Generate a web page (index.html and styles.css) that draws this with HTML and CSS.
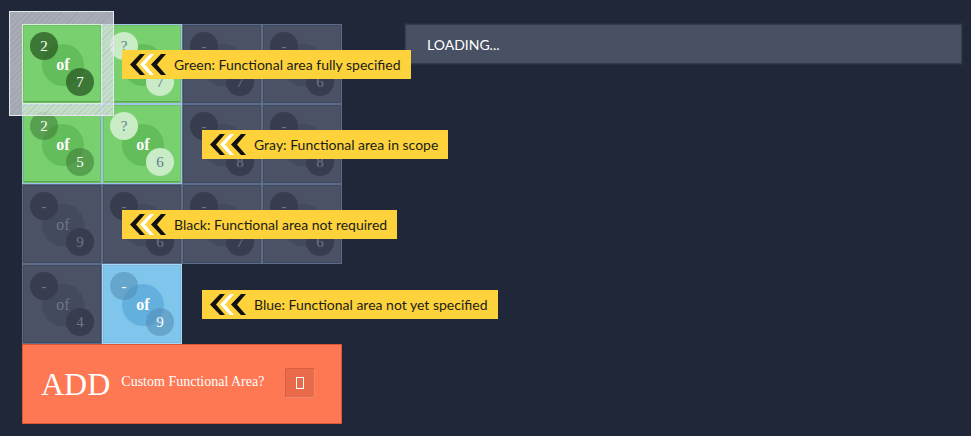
FILE: index.html
```html
<!DOCTYPE html>
<html>
<head>
<meta charset="utf-8">
<link rel="stylesheet" href="styles.css">
</head>
<body>
<div class="page">
  <div class="left">
    <div class="board">
      <div class="helper"></div>
      <div class="tile green active">
        <span class="c-big"></span>
        <span class="c-a">2</span>
        <span class="of">of</span>
        <span class="c-b">7</span>
        <div class="tip"><svg class="chev" viewBox="0 0 36 21" width="36" height="21"><polygon points="0,10.5 10,0 15,0 6,10.5 15,21 10,21" fill="#111"/><polygon points="10,10.5 20,0 24,0 15,10.5 24,21 20,21" fill="#fff"/><polygon points="21,10.5 31,0 36,0 27,10.5 36,21 31,21" fill="#111"/></svg><span>Green: Functional area fully specified</span></div>
      </div>
      <div class="tile green light">
        <span class="c-big"></span>
        <span class="c-a">?</span>
        <span class="of">of</span>
        <span class="c-b">7</span>
      </div>
      <div class="tile gray"><span class="c-big"></span><span class="c-a">-</span><span class="of">of</span><span class="c-b">7</span></div>
      <div class="tile gray"><span class="c-big"></span><span class="c-a">-</span><span class="of">of</span><span class="c-b">6</span></div>

      <div class="tile green mid">
        <span class="c-big"></span>
        <span class="c-a">2</span>
        <span class="of">of</span>
        <span class="c-b">5</span>
      </div>
      <div class="tile green light">
        <span class="c-big"></span>
        <span class="c-a">?</span>
        <span class="of">of</span>
        <span class="c-b">6</span>
        <div class="tip"><svg class="chev" viewBox="0 0 36 21" width="36" height="21"><polygon points="0,10.5 10,0 15,0 6,10.5 15,21 10,21" fill="#111"/><polygon points="10,10.5 20,0 24,0 15,10.5 24,21 20,21" fill="#fff"/><polygon points="21,10.5 31,0 36,0 27,10.5 36,21 31,21" fill="#111"/></svg><span>Gray: Functional area in scope</span></div>
      </div>
      <div class="tile gray"><span class="c-big"></span><span class="c-a">-</span><span class="of">of</span><span class="c-b">8</span></div>
      <div class="tile gray"><span class="c-big"></span><span class="c-a">-</span><span class="of">of</span><span class="c-b">8</span></div>

      <div class="tile gray">
        <span class="c-big"></span><span class="c-a">-</span><span class="of">of</span><span class="c-b">9</span>
        <div class="tip"><svg class="chev" viewBox="0 0 36 21" width="36" height="21"><polygon points="0,10.5 10,0 15,0 6,10.5 15,21 10,21" fill="#111"/><polygon points="10,10.5 20,0 24,0 15,10.5 24,21 20,21" fill="#fff"/><polygon points="21,10.5 31,0 36,0 27,10.5 36,21 31,21" fill="#111"/></svg><span>Black: Functional area not required</span></div>
      </div>
      <div class="tile gray"><span class="c-big"></span><span class="c-a">-</span><span class="of">of</span><span class="c-b">6</span></div>
      <div class="tile gray"><span class="c-big"></span><span class="c-a">-</span><span class="of">of</span><span class="c-b">7</span></div>
      <div class="tile gray"><span class="c-big"></span><span class="c-a">-</span><span class="of">of</span><span class="c-b">6</span></div>

      <div class="tile gray"><span class="c-big"></span><span class="c-a">-</span><span class="of">of</span><span class="c-b">4</span></div>
      <div class="tile blue">
        <span class="c-big"></span><span class="c-a">-</span><span class="of">of</span><span class="c-b">9</span>
        <div class="tip"><svg class="chev" viewBox="0 0 36 21" width="36" height="21"><polygon points="0,10.5 10,0 15,0 6,10.5 15,21 10,21" fill="#111"/><polygon points="10,10.5 20,0 24,0 15,10.5 24,21 20,21" fill="#fff"/><polygon points="21,10.5 31,0 36,0 27,10.5 36,21 31,21" fill="#111"/></svg><span>Blue: Functional area not yet specified</span></div>
      </div>
    </div>
    <div class="add">
      <span class="add-big">ADD</span>
      <span class="add-label">Custom Functional Area?</span>
      <button class="add-btn"><span class="tofu"></span></button>
    </div>
  </div>
  <div class="right">
    <div class="loading">LOADING...</div>
  </div>
</div>
</body>
</html>
```
FILE: styles.css
```css
html, body {
  margin: 0;
  padding: 0;
  background: #1f2738;
  width: 971px;
  height: 436px;
  overflow: hidden;
}
.page {
  display: flex;
  padding: 24px 9px 0 22px;
  gap: 63px;
}
.left {
  width: 320px;
  display: flex;
  flex-direction: column;
}
.board {
  position: relative;
  display: grid;
  grid-template-columns: repeat(4, 80px);
  grid-auto-rows: 80px;
}
.helper {
  position: absolute;
  left: -13px;
  top: -13px;
  width: 103px;
  height: 103px;
  border: 1px solid #e6e8ee;
  background-color: rgba(226, 229, 236, 0.7);
  background-image: repeating-linear-gradient(135deg, rgba(120,125,140,0.18) 0 1px, transparent 1px 4px);
  z-index: 2;
}
.tile {
  position: relative;
  box-sizing: border-box;
  border: 1px solid #5c6d8b;
  box-shadow: inset 0 0 0 1px #434a5b;
  background: #4b5265;
  overflow: visible;
  font-family: "Liberation Serif", serif;
  color: #6d7587;
}
.tile > span {
  position: absolute;
  border-radius: 50%;
  display: flex;
  align-items: center;
  justify-content: center;
  font-size: 15px;
}
.c-big { left: 19px; top: 19px; width: 42px; height: 42px; background: #434a5d; }
.c-a { left: 7px; top: 7px; width: 28px; height: 28px; background: #373d4e; }
.c-b { left: 43px; top: 43px; width: 28px; height: 28px; background: #373d4e; }
.of { left: 19px; top: 19px; width: 42px; height: 42px; font-size: 16px !important; }

.green {
  background: #78d06f;
  border-color: #9fc3e6;
  box-shadow: inset 0 0 0 1px #6cbf63, inset 0 -2px 0 #5ca654;
  color: #fff;
}
.green .c-big { background: #63bd5a; }
.green .of { font-weight: bold; }
.green .c-a, .green .c-b { background: rgba(40, 90, 35, 0.75); }
.green.mid .c-a, .green.mid .c-b { background: rgba(60, 120, 52, 0.55); }
.green.light .c-a, .green.light .c-b { background: #c9ebc5; color: #5d7d8e; }
.active {
  z-index: 3;
  border-color: #d8eed6;
}

.blue {
  background: #80c5ec;
  border-color: #a9d6f2;
  box-shadow: inset 0 0 0 1px #78bbe2;
  color: #fff;
}
.blue .c-big { background: #63b0de; }
.blue .c-a, .blue .c-b { background: rgba(80, 140, 180, 0.55); }
.blue .of { font-weight: bold; }

.tip {
  position: absolute;
  left: calc(100% + 21px);
  top: 25px;
  height: 29px;
  box-sizing: border-box;
  display: flex;
  align-items: center;
  gap: 8px;
  padding: 0 10px 0 8px;
  background: #fdd23a;
  white-space: nowrap;
  z-index: 5;
  font-family: Lato, sans-serif;
  font-size: 14px;
  color: #1c1c1c;
}
.chev { display: block; flex: none; }

.add {
  height: 80px;
  box-sizing: border-box;
  background: #fd7853;
  border: 1px solid #d8583a;
  display: flex;
  align-items: center;
  padding: 0 0 0 18px;
  font-family: "Liberation Serif", serif;
  color: #fff;
}
.add-big {
  font-size: 32px;
  margin-right: 11px;
}
.add-label {
  font-size: 14px;
  margin-top: -4px;
}
.add-btn {
  margin-left: 21px;
  width: 30px;
  height: 30px;
  margin-top: -3px;
  box-sizing: border-box;
  background: #ea6b4b;
  border: 1px solid #f08a6e;
  border-top-color: #d95d3e;
  border-left-color: #d95d3e;
  border-radius: 2px;
  display: flex;
  align-items: center;
  justify-content: center;
  padding: 0;
}
.tofu {
  display: block;
  width: 6px;
  height: 10px;
  border: 1px solid #fff;
}

.right {
  flex: 1;
}
.loading {
  height: 40px;
  box-sizing: border-box;
  background: #485163;
  border: 1px solid #333b4b;
  box-shadow: 0 0 0 1px #28303f;
  padding-left: 21px;
  display: flex;
  align-items: center;
  font-family: Lato, sans-serif;
  font-size: 14px;
  color: #fff;
}
```
